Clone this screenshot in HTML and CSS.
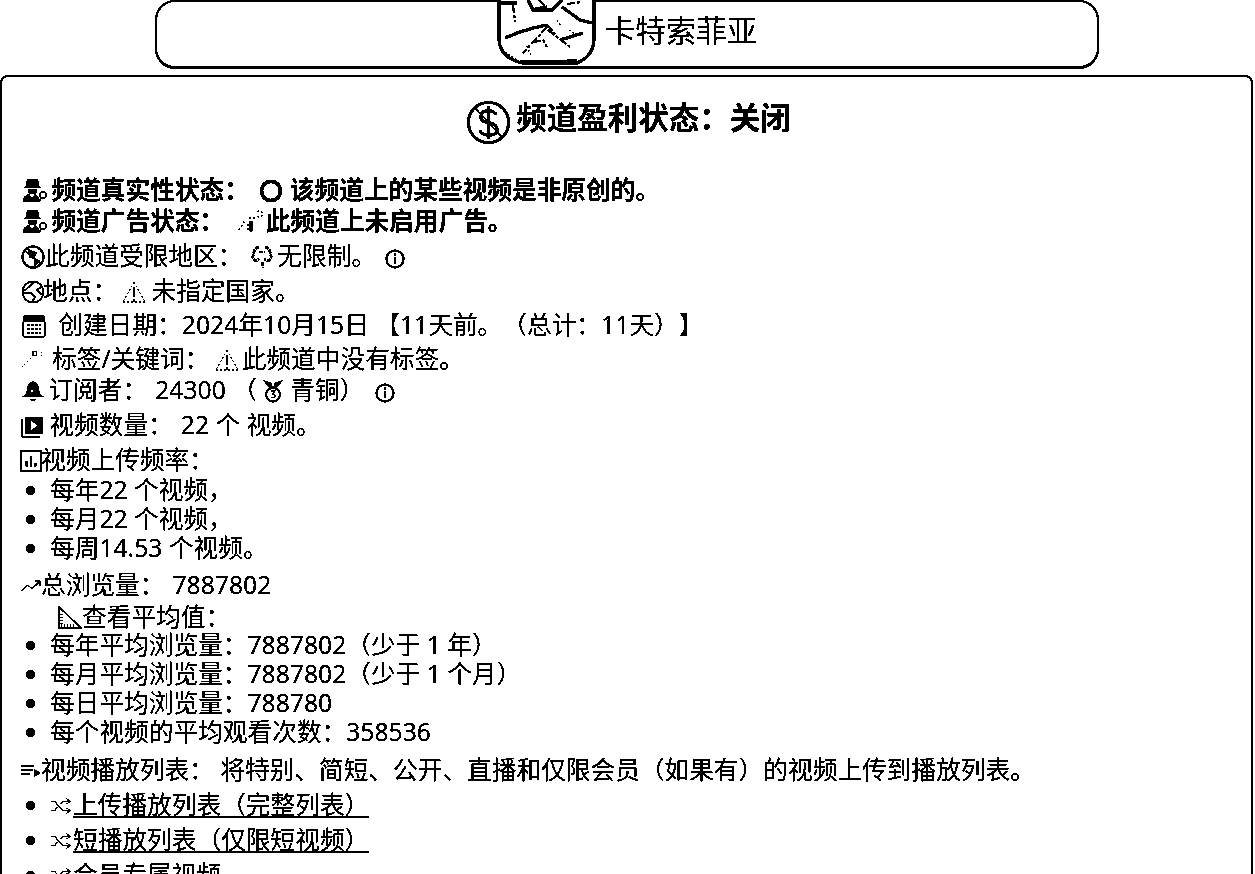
FILE: index.html
```html
<!DOCTYPE html>
<html lang="zh-CN">
<head>
  <meta charset="UTF-8" />
  <meta name="viewport" content="width=device-width, initial-scale=1.0"/>
  <title>卡特索菲亚</title>
  <link rel="stylesheet" href="styles.css">
</head>
<body>

<svg class="defs" width="0" height="0" aria-hidden="true">
  <filter id="mono" color-interpolation-filters="sRGB" x="0" y="0" width="100%" height="100%">
    <feColorMatrix type="saturate" values="0"/>
    <feComponentTransfer>
      <feFuncR type="discrete" tableValues="0 0 1"/>
      <feFuncG type="discrete" tableValues="0 0 1"/>
      <feFuncB type="discrete" tableValues="0 0 1"/>
    </feComponentTransfer>
  </filter>
  <symbol id="spy" viewBox="0 0 26 24">
    <path d="M5 0 H16 L17 7 L20 9 H2 L4 7 Z" fill="#000"/>
    <path d="M6 10.500 H15 V13 L13 15 H8 L6 13 Z" fill="#000"/>
    <path d="M1 23 Q1 16 7 15 L10 19 L13 15 Q17 16 18 23 Z" fill="#000"/>
    <circle cx="21" cy="16" r="3" fill="none" stroke="#000" stroke-width="1.5"/>
    <path d="M19 19 L17 23" stroke="#000" stroke-width="1.5"/>
  </symbol>
  <symbol id="warn" viewBox="0 0 26 24">
    <path d="M13 2 L2 22 M13 2 L24 22 M2 22 H24" fill="none" stroke="#000" stroke-width="1" stroke-dasharray="2 2"/>
    <path d="M13 7 V17 M13 19 V22" stroke="#000" stroke-width="2.4"/>
  </symbol>
  <symbol id="info" viewBox="0 0 20 20">
    <circle cx="10" cy="10" r="8.6" fill="none" stroke="#000" stroke-width="2"/>
    <path d="M10 8.5 V15" stroke="#000" stroke-width="2"/>
    <circle cx="10" cy="5.8" r="1.3" fill="#000"/>
  </symbol>
  <symbol id="shuffle" viewBox="0 0 24 18">
    <path d="M1 4 H5 L14 14 H21 M1 14 H5 L8 10 M11 7 L14 4 H21 M18 1 L22 4 L18 7 M18 11 L22 14 L18 17" fill="none" stroke="#000" stroke-width="1.2"/>
  </symbol>
</svg>

<div class="page">
  <header class="channel-head">
    <svg class="crest" viewBox="0 0 100 66">
      <path d="M2 -4 V38 Q2 58 26 63 H80 Q97 56 97 38 V-4" fill="#fff" stroke="#000" stroke-width="3"/>
      <path d="M0 3 H20 M31 0 L36 10 H55 L65 0 M38 9 L50 7 M65 7 L83 20 L95 23 M8 38 L20 33 L36 28 L50 25 M23 62 L80 61 M63 40 L86 33" fill="none" stroke="#000" stroke-width="3"/>
      <path d="M16 5 L18 22 M50 27 L26 53 M51 30 L73 47 M36 42 L46 40 L50 47 M50 25 L58 34 M70 4 L84 2 M42 0 L48 6" fill="none" stroke="#000" stroke-width="2" stroke-dasharray="8 2 3 2"/>
      <path d="M8 52 L20 60 M60 20 L64 26 M72 30 L78 34 M30 46 L34 56" fill="none" stroke="#000" stroke-width="1.2" stroke-dasharray="2 2"/>
    </svg>
    <h2 class="channel-name">卡特索菲亚</h2>
  </header>

  <main class="card">
    <h1 class="status-title">
      <svg class="title-icon" viewBox="0 0 46 46">
        <circle cx="23" cy="23" r="20.5" fill="none" stroke="#000" stroke-width="3"/>
        <path d="M9 8 L37 38" stroke="#000" stroke-width="1.5"/>
        <path d="M31 15 Q28 11 23 11 Q15 11 15 17 Q15 22 23 23 Q32 25 32 30 Q32 36 23 36 Q16 36 14 31 M23 6 V40" fill="none" stroke="#000" stroke-width="3"/>
      </svg>
      频道盈利状态：关闭
    </h1>

    <p class="row strong r1"><svg class="ico"><use href="#spy"/></svg> 频道真实性状态： <svg class="ring" viewBox="0 0 24 24"><circle cx="12" cy="12" r="9.5" fill="none" stroke="#000" stroke-width="3.5"/></svg> 该频道上的某些视频是非原创的。</p>
    <p class="row strong r2"><svg class="ico"><use href="#spy"/></svg> 频道广告状态： <svg class="ico gap" viewBox="0 0 26 24"><path d="M2 20 L8 10 M12 8 L20 8 M14 12 V22 M11 14 V20 M20 2 A3 3 0 1 1 20 6" fill="none" stroke="#000" stroke-width="1.5" stroke-dasharray="2 2"/><path d="M14 11 V21" stroke="#000" stroke-width="3"/></svg>此频道上未启用广告。</p>
    <p class="row r3">
      <svg class="ico lead" viewBox="0 0 24 24"><circle cx="12" cy="12" r="10.5" fill="none" stroke="#000" stroke-width="2"/><path d="M4 6 L20 19 M8 5 L15 8 L12 13 L9 12 Z M14 14 L18 16 L14 20 Z" fill="#000" stroke="#000" stroke-width="1.5"/></svg>此频道受限地区： <svg class="ico gap" viewBox="0 0 24 24"><path d="M9 2 Q3 4 4 9 Q1 13 6 16 L9 14 M15 2 Q21 4 20 9 Q23 13 18 16 L14 14 M9 7 L15 7 M12 17 L13 23" fill="none" stroke="#000" stroke-width="2.6" stroke-dasharray="4 1"/></svg> 无限制。 <svg class="info"><use href="#info"/></svg>
    </p>
    <p class="row r4">
      <svg class="ico lead" viewBox="0 0 24 24"><circle cx="12" cy="12" r="10.5" fill="none" stroke="#000" stroke-width="1.6"/><path d="M3 11 L9 6 L13 2 M3 13 L10 13 L14 17 L11 22 M20 7 L16 10 L21 15" fill="none" stroke="#000" stroke-width="1.6"/></svg>地点： <svg class="ico warn"><use href="#warn"/></svg>未指定国家。
    </p>
    <p class="row r5">
      <svg class="ico cal" viewBox="0 0 26 24"><path d="M2 8 V4 Q2 1 5 1 H21 Q24 1 24 4 V8 Z" fill="#000"/><path d="M2 8 V21 Q2 23 5 23 H21 Q24 23 24 21 V8" fill="none" stroke="#000" stroke-width="1.4"/><path d="M6 11 H20 M6 15 H20 M6 19 H20" stroke="#000" stroke-width="2" stroke-dasharray="2.5 1.5"/></svg> 创建日期：2024年10月15日 【11天前。（总计：11天）】
    </p>
    <p class="row r6">
      <svg class="ico tag" viewBox="0 0 28 24"><path d="M2 20 L6 16 M8 14 L12 10" stroke="#000" stroke-width="1" stroke-dasharray="2 2"/><path d="M14 3 H18 V7 H14 Z" fill="none" stroke="#000" stroke-width="1.2"/><path d="M23 4 H26 M23 7 H25" stroke="#000" stroke-width="1.4" stroke-dasharray="1 2"/></svg>标签/关键词： <svg class="ico warn"><use href="#warn"/></svg>此频道中没有标签。
    </p>
    <p class="row r7">
      <svg class="ico lead" viewBox="0 0 24 24"><path d="M12 2 Q6 4 6 10 L5 15 L1 18 H23 L19 15 L18 10 Q18 4 12 2 Z M9 20 Q12 24 15 20 Z" fill="#000"/><circle cx="11" cy="12" r="1" fill="#fff"/></svg> 订阅者：<span class="num">24300</span> （<svg class="ico medal" viewBox="0 0 24 26"><path d="M1 1 L10 4 L12 9 L14 4 L23 1 L17 9 H7 Z" fill="#000"/><circle cx="12" cy="17" r="7.5" fill="none" stroke="#000" stroke-width="2"/><path d="M10 13 H14 L11.5 16 Q15 16.500 14 19 Q12 21 10 19.500" fill="none" stroke="#000" stroke-width="1.4"/></svg> 青铜） <svg class="info"><use href="#info"/></svg>
    </p>
    <p class="row r8">
      <svg class="ico lead" viewBox="0 0 24 24"><path d="M1 5 V23 H19" fill="none" stroke="#000" stroke-width="1.2"/><rect x="4" y="3" width="18" height="17" rx="1" fill="#000"/><path d="M10 7 L17 11.500 L10 16 Z" fill="#fff"/></svg> 视频数量：<span class="num">22</span> 个 视频。
    </p>
    <p class="row r9">
      <svg class="ico small" viewBox="0 0 20 20"><rect x="1" y="1" width="18" height="18" fill="none" stroke="#000" stroke-width="1.4"/><path d="M6 15 V10 M10 15 V6 M14 15 V12" stroke="#000" stroke-width="2"/></svg>视频上传频率：
    </p>
    <ul class="plain-list">
      <li>每年22 个视频，</li>
      <li>每月22 个视频，</li>
      <li>每周14.53 个视频。</li>
    </ul>
    <p class="row r10">
      <svg class="ico small" viewBox="0 0 22 16"><path d="M1 13 L8 7 L12 11 L20 3 M15 3 H20 V8" fill="none" stroke="#000" stroke-width="1.2"/></svg>总浏览量：<span class="num">7887802</span>
    </p>
    <p class="row r11 indent">
      <svg class="ico" viewBox="0 0 26 24"><path d="M3 1 V22 H25 Z" fill="none" stroke="#000" stroke-width="1.6"/><path d="M5 8 V20 H20" fill="none" stroke="#000" stroke-width="3" stroke-dasharray="1 2"/></svg>查看平均值：
    </p>
    <ul class="plain-list after-r11">
      <li>每年平均浏览量：7887802（少于 1 年）</li>
      <li>每月平均浏览量：7887802（少于 1 个月）</li>
      <li>每日平均浏览量：788780</li>
      <li>每个视频的平均观看次数：358536</li>
    </ul>
    <p class="row r12">
      <svg class="ico small" viewBox="0 0 22 16"><path d="M1 3 H14 M1 7 H13 M1 11 H10" stroke="#000" stroke-width="1.2"/><path d="M14 6 L21 10 L14 14 Z" fill="#000"/></svg>视频播放列表： 将特别、简短、公开、直播和仅限会员（如果有）的视频上传到播放列表。
    </p>
    <ul class="link-list">
      <li><svg class="ico small"><use href="#shuffle"/></svg><a href="#">上传播放列表（完整列表）</a></li>
      <li><svg class="ico small"><use href="#shuffle"/></svg><a href="#">短播放列表（仅限短视频）</a></li>
      <li><svg class="ico small"><use href="#shuffle"/></svg><a href="#">会员专属视频</a></li>
    </ul>
  </main>
</div>

</body>
</html>
```

FILE: styles.css
```css
* {
  box-sizing: border-box;
}

html, body {
  margin: 0;
  height: 100vh;
  overflow: hidden;
  background: #fff;
}

body {
  font-family: "Noto Sans", "Noto Sans CJK SC", sans-serif;
  font-size: 24.7px;
  text-spacing-trim: space-all;
  color: #000;
}

.defs {
  display: block;
  height: 0;
}

.page {
  height: 874px;
  overflow: hidden;
  background: #fff;
  filter: url(#mono);
}

.channel-head {
  width: 944px;
  height: 69px;
  margin-left: 155px;
  border: 2px solid #000;
  border-bottom-width: 3px;
  border-radius: 20px;
  display: flex;
  justify-content: center;
  align-items: flex-end;
  gap: 8px;
}

.crest {
  width: 100px;
  height: 66px;
  flex: none;
}

.channel-name {
  margin: 0 0 16px;
  font-size: 30.5px;
  line-height: 40px;
  font-weight: 400;
}

.card {
  width: 1253px;
  height: 799px;
  margin-top: 6px;
  border: 2px solid #000;
  border-bottom: none;
  border-radius: 8px 8px 0 0;
  overflow: hidden;
}

.status-title {
  margin: 0;
  height: 80px;
  padding-left: 4px;
  display: flex;
  justify-content: center;
  align-items: center;
  gap: 5px;
  font-size: 30.5px;
  line-height: 50px;
}

.title-icon {
  width: 45px;
  height: 45px;
  margin-top: 10px;
}

.row {
  margin: 0;
  padding-left: 18px;
  height: 31px;
  line-height: 31px;
  white-space: nowrap;
}

.strong {
  font-weight: 700;
  padding-left: 20px;
}

.r1 { margin-top: 17px; }
.r3, .r4, .r8, .r9 { margin-top: 4px; }
.r5, .r6 { margin-top: 3px; }
.r10 { margin-top: 7px; }
.r11 { margin-top: 1px; }
.r12 { margin-top: 8px; }

.num {
  margin-left: 8px;
}

.ico {
  width: 26px;
  height: 24px;
  vertical-align: -4px;
}

.strong .ico:first-child {
  margin-right: -3px;
}

.gap {
  margin: 0 3px 0 6px;
}

.lead {
  margin-right: -1px;
}

.small {
  width: 22px;
  margin-right: -1px;
}

.cal {
  margin: 0 5px 0 1px;
}

.tag {
  margin-right: 6px;
}

.warn {
  margin: 0 2px 0 -2px;
}

.medal {
  width: 22px;
  margin: 0 0 0 5px;
}

.ring {
  width: 24px;
  height: 24px;
  vertical-align: -4px;
  margin-left: 4px;
}

.info {
  width: 20px;
  height: 20px;
  vertical-align: -4px;
  margin-left: 4px;
}

.r3 .gap {
  margin: 0 -4px 0 0;
}

.r3 .info {
  margin-left: 2px;
}

.r4 .lead {
  margin-right: -3px;
}

.r4 .warn {
  margin: 0 4px 0 -2px;
}

.r7 .lead {
  margin-right: -4px;
}

.r8 .lead {
  margin-right: -3px;
}

.indent {
  padding-left: 54px;
}

.plain-list,
.link-list {
  margin: 0;
  padding-left: 48px;
  line-height: 29px;
}

.after-r11 {
  margin-top: -2px;
}

.link-list {
  margin-top: 2px;
  line-height: 35px;
}

.link-list .small {
  margin-right: 1px;
}

.link-list a {
  color: #000;
  text-decoration: underline;
}
```
